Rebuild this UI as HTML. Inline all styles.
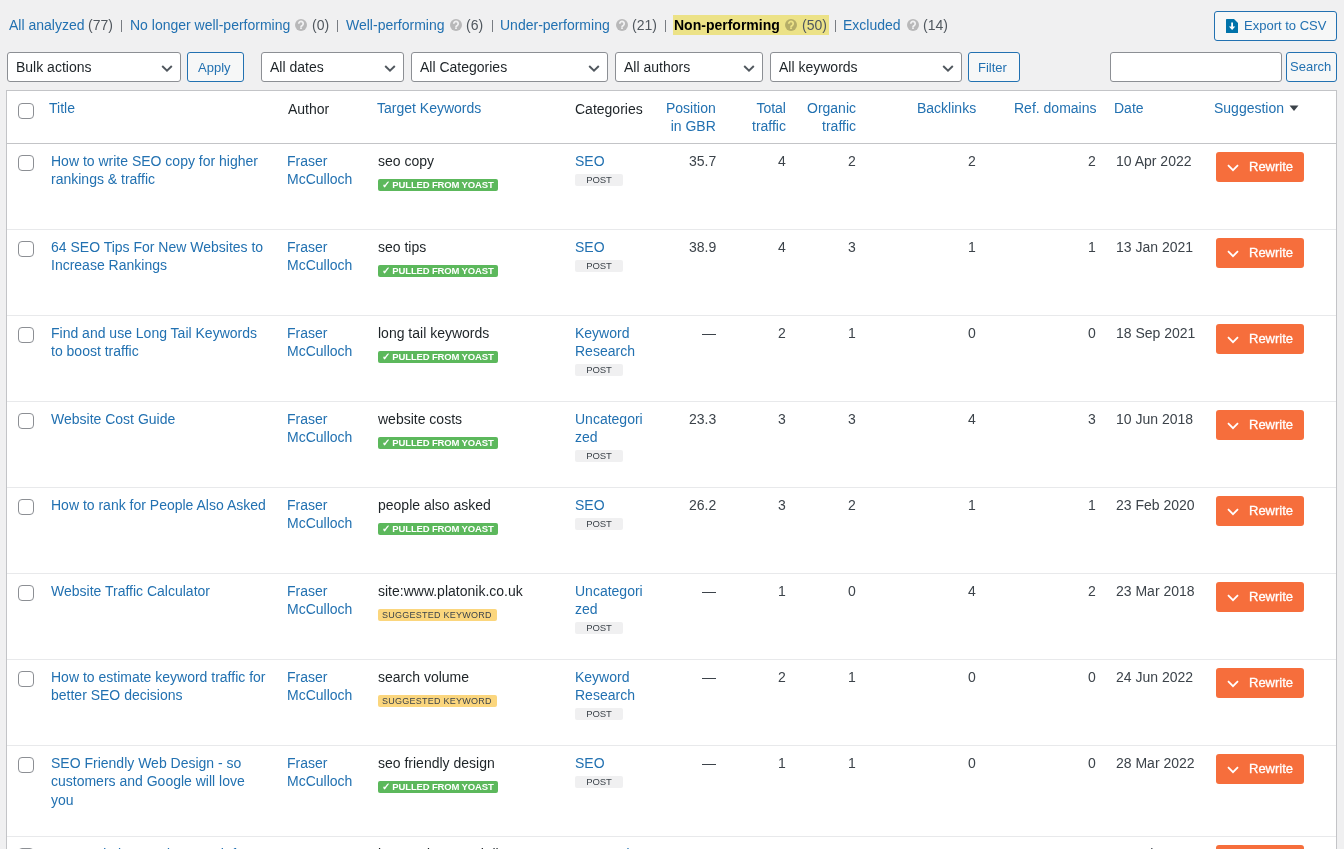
<!DOCTYPE html><html><head><meta charset="utf-8"><style>
html,body{margin:0;padding:0}
body{width:1344px;height:849px;overflow:hidden;-webkit-font-smoothing:antialiased;background:#f0f0f1;position:relative;font-family:"Liberation Sans",sans-serif;font-size:14px}
.t{position:absolute;white-space:nowrap;will-change:transform}
.b{position:absolute}
.help{position:absolute;width:12px;height:12px;border-radius:50%;background:#b8b8b8;}
.help span{position:absolute;left:0;top:0;width:12px;text-align:center;font-size:10px;line-height:12px;font-weight:bold;color:#f0f0f1}
.btn{position:absolute;box-sizing:border-box;border:1px solid #2271b1;border-radius:3px;background:#f6f7f7}
.sel{position:absolute;box-sizing:border-box;border:1px solid #8c8f94;border-radius:3px;background:#fff}
.cb{position:absolute;width:16px;height:16px;box-sizing:border-box;border:1px solid #8c8f94;border-radius:4px;background:#fff}
.bp{will-change:transform;position:absolute;height:12px;width:120px;box-sizing:border-box;padding-left:4px;background:#5cb85c;border-radius:2px;color:#fff;font-weight:bold;font-size:9.5px;line-height:12.5px;letter-spacing:-0.15px;white-space:nowrap}
.bs{will-change:transform;position:absolute;height:12px;width:119px;box-sizing:border-box;padding-left:4px;background:#fbd67d;border-radius:2px;color:#3c434a;font-size:9px;line-height:12px;letter-spacing:0.25px;white-space:nowrap}
.bpost{will-change:transform;position:absolute;height:12px;width:48px;box-sizing:border-box;background:#f0f0f1;border-radius:2px;color:#3c434a;font-size:9.5px;line-height:11px;text-align:center;letter-spacing:-0.1px}
.rw{position:absolute;width:88px;height:30px;background:#f66e3c;border-radius:3px}
.rw span{will-change:transform;position:absolute;left:33px;top:5.5px;font-size:13px;line-height:18px;color:#fff;-webkit-text-stroke:0.3px #fff}
</style></head><body>
<div class="t" style="left:9px;top:15.65px;font-size:14px;line-height:18px;color:#2271b1;font-weight:normal;">All analyzed</div>
<div class="t" style="left:88px;top:15.65px;font-size:14px;line-height:18px;color:#50575e;font-weight:normal;">(77)</div>
<div class="b" style="left:121px;top:20px;width:1px;height:12px;background:#787c82"></div>
<div class="t" style="left:130px;top:15.65px;font-size:14px;line-height:18px;color:#2271b1;font-weight:normal;">No longer well-performing</div>
<svg class="b" style="left:295px;top:19px" width="12" height="12" viewBox="0 0 12 12"><circle cx="6" cy="6" r="6" fill="rgba(0,0,0,0.23)"/><path d="M3.8 4.7a2.2 2.2 0 1 1 3.5 1.7c-0.8 0.5 -1.3 0.8 -1.3 1.5" fill="none" stroke="#f0f0f1" stroke-width="1.8"/><rect x="5.1" y="8.3" width="1.8" height="1.7" fill="#f0f0f1"/></svg>
<div class="t" style="left:312px;top:15.65px;font-size:14px;line-height:18px;color:#50575e;font-weight:normal;">(0)</div>
<div class="b" style="left:337px;top:20px;width:1px;height:12px;background:#787c82"></div>
<div class="t" style="left:346px;top:15.65px;font-size:14px;line-height:18px;color:#2271b1;font-weight:normal;">Well-performing</div>
<svg class="b" style="left:450px;top:19px" width="12" height="12" viewBox="0 0 12 12"><circle cx="6" cy="6" r="6" fill="rgba(0,0,0,0.23)"/><path d="M3.8 4.7a2.2 2.2 0 1 1 3.5 1.7c-0.8 0.5 -1.3 0.8 -1.3 1.5" fill="none" stroke="#f0f0f1" stroke-width="1.8"/><rect x="5.1" y="8.3" width="1.8" height="1.7" fill="#f0f0f1"/></svg>
<div class="t" style="left:466px;top:15.65px;font-size:14px;line-height:18px;color:#50575e;font-weight:normal;">(6)</div>
<div class="b" style="left:492px;top:20px;width:1px;height:12px;background:#787c82"></div>
<div class="t" style="left:500px;top:15.65px;font-size:14px;line-height:18px;color:#2271b1;font-weight:normal;">Under-performing</div>
<svg class="b" style="left:616px;top:19px" width="12" height="12" viewBox="0 0 12 12"><circle cx="6" cy="6" r="6" fill="rgba(0,0,0,0.23)"/><path d="M3.8 4.7a2.2 2.2 0 1 1 3.5 1.7c-0.8 0.5 -1.3 0.8 -1.3 1.5" fill="none" stroke="#f0f0f1" stroke-width="1.8"/><rect x="5.1" y="8.3" width="1.8" height="1.7" fill="#f0f0f1"/></svg>
<div class="t" style="left:632px;top:15.65px;font-size:14px;line-height:18px;color:#50575e;font-weight:normal;">(21)</div>
<div class="b" style="left:665px;top:20px;width:1px;height:12px;background:#787c82"></div>
<div class="b" style="left:673px;top:15px;width:156px;height:20px;background:#ece287"></div>
<div class="t" style="left:674px;top:15.65px;font-size:14px;line-height:18px;color:#000;font-weight:bold;">Non-performing</div>
<svg class="b" style="left:785px;top:19px" width="12" height="12" viewBox="0 0 12 12"><circle cx="6" cy="6" r="6" fill="rgba(0,0,0,0.23)"/><path d="M3.8 4.7a2.2 2.2 0 1 1 3.5 1.7c-0.8 0.5 -1.3 0.8 -1.3 1.5" fill="none" stroke="#ece287" stroke-width="1.8"/><rect x="5.1" y="8.3" width="1.8" height="1.7" fill="#ece287"/></svg>
<div class="t" style="left:802px;top:15.65px;font-size:14px;line-height:18px;color:#50575e;font-weight:normal;">(50)</div>
<div class="b" style="left:835px;top:20px;width:1px;height:12px;background:#787c82"></div>
<div class="t" style="left:843px;top:15.65px;font-size:14px;line-height:18px;color:#2271b1;font-weight:normal;">Excluded</div>
<svg class="b" style="left:907px;top:19px" width="12" height="12" viewBox="0 0 12 12"><circle cx="6" cy="6" r="6" fill="rgba(0,0,0,0.23)"/><path d="M3.8 4.7a2.2 2.2 0 1 1 3.5 1.7c-0.8 0.5 -1.3 0.8 -1.3 1.5" fill="none" stroke="#f0f0f1" stroke-width="1.8"/><rect x="5.1" y="8.3" width="1.8" height="1.7" fill="#f0f0f1"/></svg>
<div class="t" style="left:923px;top:15.65px;font-size:14px;line-height:18px;color:#50575e;font-weight:normal;">(14)</div>
<div class="btn" style="left:1214px;top:11px;width:123px;height:30px;"></div>
<svg class="b" style="left:1226px;top:19px" width="12" height="14" viewBox="0 0 12 14"><path d="M0 0.6Q0 0 0.6 0H8L12 4V13.4Q12 14 11.4 14H0.6Q0 14 0 13.4Z" fill="#0073aa"/><path d="M5.2 3.5h1.8v4h2.3L6.1 11 2.9 7.5h2.3z" fill="#fff"/></svg>
<div class="t" style="left:1244px;top:16.80px;font-size:13px;line-height:18px;color:#2271b1;font-weight:normal;">Export to CSV</div>
<div class="sel" style="left:7px;top:52px;width:174px;height:30px"></div>
<div class="t" style="left:16px;top:58.35px;font-size:14px;line-height:18px;color:#1d2327;font-weight:normal;">Bulk actions</div>
<svg class="b" style="left:161px;top:63.5px" width="12" height="9" viewBox="0 0 12 9"><path d="M1.2 2 L6 6.7 L10.8 2" fill="none" stroke="#50575e" stroke-width="1.9"/></svg>
<div class="btn" style="left:187px;top:52px;width:57px;height:30px;"></div>
<div class="t" style="left:198px;top:59.00px;font-size:13px;line-height:18px;color:#2271b1;font-weight:normal;">Apply</div>
<div class="sel" style="left:261px;top:52px;width:143px;height:30px"></div>
<div class="t" style="left:270px;top:58.35px;font-size:14px;line-height:18px;color:#1d2327;font-weight:normal;">All dates</div>
<svg class="b" style="left:384px;top:63.5px" width="12" height="9" viewBox="0 0 12 9"><path d="M1.2 2 L6 6.7 L10.8 2" fill="none" stroke="#50575e" stroke-width="1.9"/></svg>
<div class="sel" style="left:411px;top:52px;width:197px;height:30px"></div>
<div class="t" style="left:420px;top:58.35px;font-size:14px;line-height:18px;color:#1d2327;font-weight:normal;">All Categories</div>
<svg class="b" style="left:588px;top:63.5px" width="12" height="9" viewBox="0 0 12 9"><path d="M1.2 2 L6 6.7 L10.8 2" fill="none" stroke="#50575e" stroke-width="1.9"/></svg>
<div class="sel" style="left:615px;top:52px;width:148px;height:30px"></div>
<div class="t" style="left:624px;top:58.35px;font-size:14px;line-height:18px;color:#1d2327;font-weight:normal;">All authors</div>
<svg class="b" style="left:743px;top:63.5px" width="12" height="9" viewBox="0 0 12 9"><path d="M1.2 2 L6 6.7 L10.8 2" fill="none" stroke="#50575e" stroke-width="1.9"/></svg>
<div class="sel" style="left:770px;top:52px;width:192px;height:30px"></div>
<div class="t" style="left:779px;top:58.35px;font-size:14px;line-height:18px;color:#1d2327;font-weight:normal;">All keywords</div>
<svg class="b" style="left:942px;top:63.5px" width="12" height="9" viewBox="0 0 12 9"><path d="M1.2 2 L6 6.7 L10.8 2" fill="none" stroke="#50575e" stroke-width="1.9"/></svg>
<div class="btn" style="left:968px;top:52px;width:52px;height:30px;"></div>
<div class="t" style="left:978px;top:58.80px;font-size:13px;line-height:18px;color:#2271b1;font-weight:normal;">Filter</div>
<div class="sel" style="left:1110px;top:52px;width:172px;height:30px"></div>
<div class="btn" style="left:1286px;top:52px;width:51px;height:30px;"></div>
<div class="t" style="left:1290px;top:57.80px;font-size:13px;line-height:18px;color:#2271b1;font-weight:normal;">Search</div>
<div class="b" style="left:6px;top:90px;width:1331px;height:759px;background:#fff;border:1px solid #c3c4c7;border-bottom:none;box-sizing:border-box"></div>
<div class="b" style="left:7px;top:143px;width:1329px;height:1px;background:#c3c4c7"></div>
<div class="cb" style="left:18px;top:103px"></div>
<div class="t" style="left:49px;top:99.15px;font-size:14px;line-height:18px;color:#2271b1;font-weight:normal;">Title</div>
<div class="t" style="left:288px;top:99.65px;font-size:14px;line-height:18px;color:#1d2327;font-weight:normal;">Author</div>
<div class="t" style="left:376.5px;top:99.15px;font-size:14px;line-height:18px;color:#2271b1;font-weight:normal;">Target Keywords</div>
<div class="t" style="left:575px;top:99.65px;font-size:14px;line-height:18px;color:#1d2327;font-weight:normal;">Categories</div>
<div class="t" style="right:628px;top:99.15px;font-size:14px;line-height:18px;color:#2271b1;font-weight:normal;text-align:right;">Position<br>in GBR</div>
<div class="t" style="right:558px;top:99.15px;font-size:14px;line-height:18px;color:#2271b1;font-weight:normal;text-align:right;">Total<br>traffic</div>
<div class="t" style="right:488px;top:99.15px;font-size:14px;line-height:18px;color:#2271b1;font-weight:normal;text-align:right;">Organic<br>traffic</div>
<div class="t" style="right:368px;top:99.15px;font-size:14px;line-height:18px;color:#2271b1;font-weight:normal;text-align:right;">Backlinks</div>
<div class="t" style="right:248px;top:99.15px;font-size:14px;line-height:18px;color:#2271b1;font-weight:normal;text-align:right;">Ref. domains</div>
<div class="t" style="left:1114px;top:99.15px;font-size:14px;line-height:18px;color:#2271b1;font-weight:normal;">Date</div>
<div class="t" style="left:1213.5px;top:99.15px;font-size:14px;line-height:18px;color:#2271b1;font-weight:normal;">Suggestion</div>
<svg class="b" style="left:1289px;top:104px" width="10" height="8" viewBox="0 0 10 8"><path d="M0.5 1.5h9L5 7z" fill="#3c434a"/></svg>
<div class="cb" style="left:18px;top:155px"></div>
<div class="t" style="left:51px;top:151.95px;font-size:14px;line-height:18.4px;color:#2271b1;font-weight:normal;">How to write SEO copy for higher<br>rankings &amp; traffic</div>
<div class="t" style="left:287px;top:151.95px;font-size:14px;line-height:18.4px;color:#2271b1;font-weight:normal;">Fraser<br>McCulloch</div>
<div class="t" style="left:377.5px;top:151.95px;font-size:14px;line-height:18.4px;color:#1d2327;font-weight:normal;">seo copy</div>
<div class="bp" style="left:378px;top:179px">&#10003; PULLED FROM YOAST</div>
<div class="t" style="left:575px;top:151.95px;font-size:14px;line-height:18.4px;color:#2271b1;font-weight:normal;">SEO</div>
<div class="bpost" style="left:575px;top:174px">POST</div>
<div class="t" style="right:628px;top:152.15px;font-size:14px;line-height:18px;color:#3c434a;font-weight:normal;text-align:right;">35.7</div>
<div class="t" style="right:558px;top:152.15px;font-size:14px;line-height:18px;color:#3c434a;font-weight:normal;text-align:right;">4</div>
<div class="t" style="right:488px;top:152.15px;font-size:14px;line-height:18px;color:#3c434a;font-weight:normal;text-align:right;">2</div>
<div class="t" style="right:368px;top:152.15px;font-size:14px;line-height:18px;color:#3c434a;font-weight:normal;text-align:right;">2</div>
<div class="t" style="right:248px;top:152.15px;font-size:14px;line-height:18px;color:#3c434a;font-weight:normal;text-align:right;">2</div>
<div class="t" style="left:1116px;top:152.15px;font-size:14px;line-height:18px;color:#3c434a;font-weight:normal;">10 Apr 2022</div>
<div class="rw" style="left:1216px;top:152px"><svg width="12" height="8" viewBox="0 0 12 8" style="position:absolute;left:11px;top:12px"><path d="M1 1.2 L6 6.2 L11 1.2" fill="none" stroke="#fff" stroke-width="1.8"/></svg><span>Rewrite</span></div>
<div class="b" style="left:7px;top:229px;width:1329px;height:1px;background:#e8e9eb"></div>
<div class="cb" style="left:18px;top:241px"></div>
<div class="t" style="left:51px;top:237.95px;font-size:14px;line-height:18.4px;color:#2271b1;font-weight:normal;">64 SEO Tips For New Websites to<br>Increase Rankings</div>
<div class="t" style="left:287px;top:237.95px;font-size:14px;line-height:18.4px;color:#2271b1;font-weight:normal;">Fraser<br>McCulloch</div>
<div class="t" style="left:377.5px;top:237.95px;font-size:14px;line-height:18.4px;color:#1d2327;font-weight:normal;">seo tips</div>
<div class="bp" style="left:378px;top:265px">&#10003; PULLED FROM YOAST</div>
<div class="t" style="left:575px;top:237.95px;font-size:14px;line-height:18.4px;color:#2271b1;font-weight:normal;">SEO</div>
<div class="bpost" style="left:575px;top:260px">POST</div>
<div class="t" style="right:628px;top:238.15px;font-size:14px;line-height:18px;color:#3c434a;font-weight:normal;text-align:right;">38.9</div>
<div class="t" style="right:558px;top:238.15px;font-size:14px;line-height:18px;color:#3c434a;font-weight:normal;text-align:right;">4</div>
<div class="t" style="right:488px;top:238.15px;font-size:14px;line-height:18px;color:#3c434a;font-weight:normal;text-align:right;">3</div>
<div class="t" style="right:368px;top:238.15px;font-size:14px;line-height:18px;color:#3c434a;font-weight:normal;text-align:right;">1</div>
<div class="t" style="right:248px;top:238.15px;font-size:14px;line-height:18px;color:#3c434a;font-weight:normal;text-align:right;">1</div>
<div class="t" style="left:1116px;top:238.15px;font-size:14px;line-height:18px;color:#3c434a;font-weight:normal;">13 Jan 2021</div>
<div class="rw" style="left:1216px;top:238px"><svg width="12" height="8" viewBox="0 0 12 8" style="position:absolute;left:11px;top:12px"><path d="M1 1.2 L6 6.2 L11 1.2" fill="none" stroke="#fff" stroke-width="1.8"/></svg><span>Rewrite</span></div>
<div class="b" style="left:7px;top:315px;width:1329px;height:1px;background:#e8e9eb"></div>
<div class="cb" style="left:18px;top:327px"></div>
<div class="t" style="left:51px;top:323.95px;font-size:14px;line-height:18.4px;color:#2271b1;font-weight:normal;">Find and use Long Tail Keywords<br>to boost traffic</div>
<div class="t" style="left:287px;top:323.95px;font-size:14px;line-height:18.4px;color:#2271b1;font-weight:normal;">Fraser<br>McCulloch</div>
<div class="t" style="left:377.5px;top:323.95px;font-size:14px;line-height:18.4px;color:#1d2327;font-weight:normal;">long tail keywords</div>
<div class="bp" style="left:378px;top:351px">&#10003; PULLED FROM YOAST</div>
<div class="t" style="left:575px;top:323.95px;font-size:14px;line-height:18.4px;color:#2271b1;font-weight:normal;">Keyword<br>Research</div>
<div class="bpost" style="left:575px;top:364px">POST</div>
<div class="t" style="right:628px;top:324.15px;font-size:14px;line-height:18px;color:#3c434a;font-weight:normal;text-align:right;">—</div>
<div class="t" style="right:558px;top:324.15px;font-size:14px;line-height:18px;color:#3c434a;font-weight:normal;text-align:right;">2</div>
<div class="t" style="right:488px;top:324.15px;font-size:14px;line-height:18px;color:#3c434a;font-weight:normal;text-align:right;">1</div>
<div class="t" style="right:368px;top:324.15px;font-size:14px;line-height:18px;color:#3c434a;font-weight:normal;text-align:right;">0</div>
<div class="t" style="right:248px;top:324.15px;font-size:14px;line-height:18px;color:#3c434a;font-weight:normal;text-align:right;">0</div>
<div class="t" style="left:1116px;top:324.15px;font-size:14px;line-height:18px;color:#3c434a;font-weight:normal;">18 Sep 2021</div>
<div class="rw" style="left:1216px;top:324px"><svg width="12" height="8" viewBox="0 0 12 8" style="position:absolute;left:11px;top:12px"><path d="M1 1.2 L6 6.2 L11 1.2" fill="none" stroke="#fff" stroke-width="1.8"/></svg><span>Rewrite</span></div>
<div class="b" style="left:7px;top:401px;width:1329px;height:1px;background:#e8e9eb"></div>
<div class="cb" style="left:18px;top:413px"></div>
<div class="t" style="left:51px;top:409.95px;font-size:14px;line-height:18.4px;color:#2271b1;font-weight:normal;">Website Cost Guide</div>
<div class="t" style="left:287px;top:409.95px;font-size:14px;line-height:18.4px;color:#2271b1;font-weight:normal;">Fraser<br>McCulloch</div>
<div class="t" style="left:377.5px;top:409.95px;font-size:14px;line-height:18.4px;color:#1d2327;font-weight:normal;">website costs</div>
<div class="bp" style="left:378px;top:437px">&#10003; PULLED FROM YOAST</div>
<div class="t" style="left:575px;top:409.95px;font-size:14px;line-height:18.4px;color:#2271b1;font-weight:normal;">Uncategori<br>zed</div>
<div class="bpost" style="left:575px;top:450px">POST</div>
<div class="t" style="right:628px;top:410.15px;font-size:14px;line-height:18px;color:#3c434a;font-weight:normal;text-align:right;">23.3</div>
<div class="t" style="right:558px;top:410.15px;font-size:14px;line-height:18px;color:#3c434a;font-weight:normal;text-align:right;">3</div>
<div class="t" style="right:488px;top:410.15px;font-size:14px;line-height:18px;color:#3c434a;font-weight:normal;text-align:right;">3</div>
<div class="t" style="right:368px;top:410.15px;font-size:14px;line-height:18px;color:#3c434a;font-weight:normal;text-align:right;">4</div>
<div class="t" style="right:248px;top:410.15px;font-size:14px;line-height:18px;color:#3c434a;font-weight:normal;text-align:right;">3</div>
<div class="t" style="left:1116px;top:410.15px;font-size:14px;line-height:18px;color:#3c434a;font-weight:normal;">10 Jun 2018</div>
<div class="rw" style="left:1216px;top:410px"><svg width="12" height="8" viewBox="0 0 12 8" style="position:absolute;left:11px;top:12px"><path d="M1 1.2 L6 6.2 L11 1.2" fill="none" stroke="#fff" stroke-width="1.8"/></svg><span>Rewrite</span></div>
<div class="b" style="left:7px;top:487px;width:1329px;height:1px;background:#e8e9eb"></div>
<div class="cb" style="left:18px;top:499px"></div>
<div class="t" style="left:51px;top:495.95px;font-size:14px;line-height:18.4px;color:#2271b1;font-weight:normal;">How to rank for People Also Asked</div>
<div class="t" style="left:287px;top:495.95px;font-size:14px;line-height:18.4px;color:#2271b1;font-weight:normal;">Fraser<br>McCulloch</div>
<div class="t" style="left:377.5px;top:495.95px;font-size:14px;line-height:18.4px;color:#1d2327;font-weight:normal;">people also asked</div>
<div class="bp" style="left:378px;top:523px">&#10003; PULLED FROM YOAST</div>
<div class="t" style="left:575px;top:495.95px;font-size:14px;line-height:18.4px;color:#2271b1;font-weight:normal;">SEO</div>
<div class="bpost" style="left:575px;top:518px">POST</div>
<div class="t" style="right:628px;top:496.15px;font-size:14px;line-height:18px;color:#3c434a;font-weight:normal;text-align:right;">26.2</div>
<div class="t" style="right:558px;top:496.15px;font-size:14px;line-height:18px;color:#3c434a;font-weight:normal;text-align:right;">3</div>
<div class="t" style="right:488px;top:496.15px;font-size:14px;line-height:18px;color:#3c434a;font-weight:normal;text-align:right;">2</div>
<div class="t" style="right:368px;top:496.15px;font-size:14px;line-height:18px;color:#3c434a;font-weight:normal;text-align:right;">1</div>
<div class="t" style="right:248px;top:496.15px;font-size:14px;line-height:18px;color:#3c434a;font-weight:normal;text-align:right;">1</div>
<div class="t" style="left:1116px;top:496.15px;font-size:14px;line-height:18px;color:#3c434a;font-weight:normal;">23 Feb 2020</div>
<div class="rw" style="left:1216px;top:496px"><svg width="12" height="8" viewBox="0 0 12 8" style="position:absolute;left:11px;top:12px"><path d="M1 1.2 L6 6.2 L11 1.2" fill="none" stroke="#fff" stroke-width="1.8"/></svg><span>Rewrite</span></div>
<div class="b" style="left:7px;top:573px;width:1329px;height:1px;background:#e8e9eb"></div>
<div class="cb" style="left:18px;top:585px"></div>
<div class="t" style="left:51px;top:581.95px;font-size:14px;line-height:18.4px;color:#2271b1;font-weight:normal;">Website Traffic Calculator</div>
<div class="t" style="left:287px;top:581.95px;font-size:14px;line-height:18.4px;color:#2271b1;font-weight:normal;">Fraser<br>McCulloch</div>
<div class="t" style="left:377.5px;top:581.95px;font-size:14px;line-height:18.4px;color:#1d2327;font-weight:normal;">site:www.platonik.co.uk</div>
<div class="bs" style="left:378px;top:609px">SUGGESTED KEYWORD</div>
<div class="t" style="left:575px;top:581.95px;font-size:14px;line-height:18.4px;color:#2271b1;font-weight:normal;">Uncategori<br>zed</div>
<div class="bpost" style="left:575px;top:622px">POST</div>
<div class="t" style="right:628px;top:582.15px;font-size:14px;line-height:18px;color:#3c434a;font-weight:normal;text-align:right;">—</div>
<div class="t" style="right:558px;top:582.15px;font-size:14px;line-height:18px;color:#3c434a;font-weight:normal;text-align:right;">1</div>
<div class="t" style="right:488px;top:582.15px;font-size:14px;line-height:18px;color:#3c434a;font-weight:normal;text-align:right;">0</div>
<div class="t" style="right:368px;top:582.15px;font-size:14px;line-height:18px;color:#3c434a;font-weight:normal;text-align:right;">4</div>
<div class="t" style="right:248px;top:582.15px;font-size:14px;line-height:18px;color:#3c434a;font-weight:normal;text-align:right;">2</div>
<div class="t" style="left:1116px;top:582.15px;font-size:14px;line-height:18px;color:#3c434a;font-weight:normal;">23 Mar 2018</div>
<div class="rw" style="left:1216px;top:582px"><svg width="12" height="8" viewBox="0 0 12 8" style="position:absolute;left:11px;top:12px"><path d="M1 1.2 L6 6.2 L11 1.2" fill="none" stroke="#fff" stroke-width="1.8"/></svg><span>Rewrite</span></div>
<div class="b" style="left:7px;top:659px;width:1329px;height:1px;background:#e8e9eb"></div>
<div class="cb" style="left:18px;top:671px"></div>
<div class="t" style="left:51px;top:667.95px;font-size:14px;line-height:18.4px;color:#2271b1;font-weight:normal;">How to estimate keyword traffic for<br>better SEO decisions</div>
<div class="t" style="left:287px;top:667.95px;font-size:14px;line-height:18.4px;color:#2271b1;font-weight:normal;">Fraser<br>McCulloch</div>
<div class="t" style="left:377.5px;top:667.95px;font-size:14px;line-height:18.4px;color:#1d2327;font-weight:normal;">search volume</div>
<div class="bs" style="left:378px;top:695px">SUGGESTED KEYWORD</div>
<div class="t" style="left:575px;top:667.95px;font-size:14px;line-height:18.4px;color:#2271b1;font-weight:normal;">Keyword<br>Research</div>
<div class="bpost" style="left:575px;top:708px">POST</div>
<div class="t" style="right:628px;top:668.15px;font-size:14px;line-height:18px;color:#3c434a;font-weight:normal;text-align:right;">—</div>
<div class="t" style="right:558px;top:668.15px;font-size:14px;line-height:18px;color:#3c434a;font-weight:normal;text-align:right;">2</div>
<div class="t" style="right:488px;top:668.15px;font-size:14px;line-height:18px;color:#3c434a;font-weight:normal;text-align:right;">1</div>
<div class="t" style="right:368px;top:668.15px;font-size:14px;line-height:18px;color:#3c434a;font-weight:normal;text-align:right;">0</div>
<div class="t" style="right:248px;top:668.15px;font-size:14px;line-height:18px;color:#3c434a;font-weight:normal;text-align:right;">0</div>
<div class="t" style="left:1116px;top:668.15px;font-size:14px;line-height:18px;color:#3c434a;font-weight:normal;">24 Jun 2022</div>
<div class="rw" style="left:1216px;top:668px"><svg width="12" height="8" viewBox="0 0 12 8" style="position:absolute;left:11px;top:12px"><path d="M1 1.2 L6 6.2 L11 1.2" fill="none" stroke="#fff" stroke-width="1.8"/></svg><span>Rewrite</span></div>
<div class="b" style="left:7px;top:745px;width:1329px;height:1px;background:#e8e9eb"></div>
<div class="cb" style="left:18px;top:757px"></div>
<div class="t" style="left:51px;top:753.95px;font-size:14px;line-height:18.4px;color:#2271b1;font-weight:normal;">SEO Friendly Web Design - so<br>customers and Google will love<br>you</div>
<div class="t" style="left:287px;top:753.95px;font-size:14px;line-height:18.4px;color:#2271b1;font-weight:normal;">Fraser<br>McCulloch</div>
<div class="t" style="left:377.5px;top:753.95px;font-size:14px;line-height:18.4px;color:#1d2327;font-weight:normal;">seo friendly design</div>
<div class="bp" style="left:378px;top:781px">&#10003; PULLED FROM YOAST</div>
<div class="t" style="left:575px;top:753.95px;font-size:14px;line-height:18.4px;color:#2271b1;font-weight:normal;">SEO</div>
<div class="bpost" style="left:575px;top:776px">POST</div>
<div class="t" style="right:628px;top:754.15px;font-size:14px;line-height:18px;color:#3c434a;font-weight:normal;text-align:right;">—</div>
<div class="t" style="right:558px;top:754.15px;font-size:14px;line-height:18px;color:#3c434a;font-weight:normal;text-align:right;">1</div>
<div class="t" style="right:488px;top:754.15px;font-size:14px;line-height:18px;color:#3c434a;font-weight:normal;text-align:right;">1</div>
<div class="t" style="right:368px;top:754.15px;font-size:14px;line-height:18px;color:#3c434a;font-weight:normal;text-align:right;">0</div>
<div class="t" style="right:248px;top:754.15px;font-size:14px;line-height:18px;color:#3c434a;font-weight:normal;text-align:right;">0</div>
<div class="t" style="left:1116px;top:754.15px;font-size:14px;line-height:18px;color:#3c434a;font-weight:normal;">28 Mar 2022</div>
<div class="rw" style="left:1216px;top:754px"><svg width="12" height="8" viewBox="0 0 12 8" style="position:absolute;left:11px;top:12px"><path d="M1 1.2 L6 6.2 L11 1.2" fill="none" stroke="#fff" stroke-width="1.8"/></svg><span>Rewrite</span></div>
<div class="b" style="left:7px;top:836px;width:1329px;height:1px;background:#e8e9eb"></div>
<div class="cb" style="left:18px;top:848px"></div>
<div class="t" style="left:51px;top:844.95px;font-size:14px;line-height:18.4px;color:#2271b1;font-weight:normal;">How to do keyword research for a<br>new website</div>
<div class="t" style="left:287px;top:844.95px;font-size:14px;line-height:18.4px;color:#2271b1;font-weight:normal;">Fraser<br>McCulloch</div>
<div class="t" style="left:377.5px;top:844.95px;font-size:14px;line-height:18.4px;color:#1d2327;font-weight:normal;">keyword research list</div>
<div class="bp" style="left:378px;top:872px">&#10003; PULLED FROM YOAST</div>
<div class="t" style="left:575px;top:844.95px;font-size:14px;line-height:18.4px;color:#2271b1;font-weight:normal;">Keyword<br>Research</div>
<div class="bpost" style="left:575px;top:885px">POST</div>
<div class="t" style="right:628px;top:845.15px;font-size:14px;line-height:18px;color:#3c434a;font-weight:normal;text-align:right;">7.4</div>
<div class="t" style="right:558px;top:845.15px;font-size:14px;line-height:18px;color:#3c434a;font-weight:normal;text-align:right;">4</div>
<div class="t" style="right:488px;top:845.15px;font-size:14px;line-height:18px;color:#3c434a;font-weight:normal;text-align:right;">1</div>
<div class="t" style="right:368px;top:845.15px;font-size:14px;line-height:18px;color:#3c434a;font-weight:normal;text-align:right;">1</div>
<div class="t" style="right:248px;top:845.15px;font-size:14px;line-height:18px;color:#3c434a;font-weight:normal;text-align:right;">1</div>
<div class="t" style="left:1116px;top:845.15px;font-size:14px;line-height:18px;color:#3c434a;font-weight:normal;">16 Jul 2022</div>
<div class="rw" style="left:1216px;top:845px"><svg width="12" height="8" viewBox="0 0 12 8" style="position:absolute;left:11px;top:12px"><path d="M1 1.2 L6 6.2 L11 1.2" fill="none" stroke="#fff" stroke-width="1.8"/></svg><span>Rewrite</span></div>
</body></html>
